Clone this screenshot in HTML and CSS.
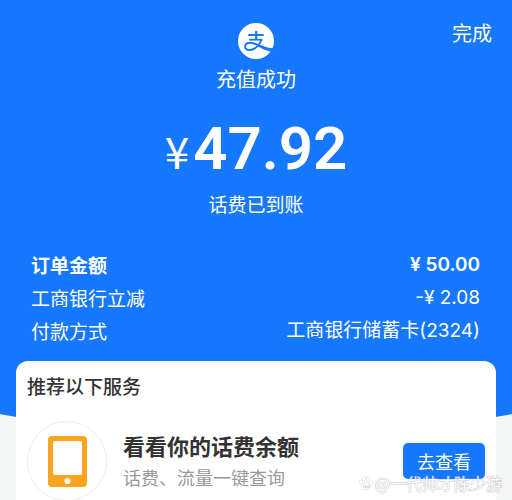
FILE: index.html
```html
<!DOCTYPE html>
<html lang="zh-CN">
<head>
<meta charset="utf-8">
<meta name="viewport" content="width=device-width, initial-scale=1">
<title>充值成功</title>
<link rel="stylesheet" href="styles.css">
</head>
<body>
<main class="page">
  <header class="hero">
    <button class="done" type="button">完成</button>
    <svg class="logo" viewBox="0 0 36 36" aria-hidden="true">
      <circle cx="18" cy="18" r="18" fill="#fff"/>
      <g fill="none" stroke="#1677ff">
        <path d="M10.300 12H25.700M18.200 8V17" stroke-width="2.200"/>
        <path d="M11.200 16.700H24.200" stroke-width="1.800"/>
        <path d="M23.600 16.500C21.800 21.500 17 27 12 27C8.800 27 7.200 25.500 7.200 23.400C7.200 21 9.300 19.700 12 19.700C17 19.700 22 24 35 27" stroke-width="2"/>
      </g>
      <path d="M20 22C25 24 29 25 35 25.500L33.500 29C28 27.500 23.500 25.500 19 23Z" fill="#1677ff"/>
    </svg>
    <h1 class="title">充值成功</h1>
    <p class="amount"><span class="currency">¥</span>47.92</p>
    <p class="status">话费已到账</p>
  </header>
  <dl class="details">
    <div class="row strong"><dt>订单金额</dt><dd>¥ 50.00</dd></div>
    <div class="row"><dt>工商银行立减</dt><dd>-¥ 2.08</dd></div>
    <div class="row"><dt>付款方式</dt><dd>工商银行储蓄卡(2324)</dd></div>
  </dl>
  <section class="card">
    <h2 class="card-title">推荐以下服务</h2>
    <div class="service">
      <span class="service-icon">
        <svg viewBox="0 0 39 51" aria-hidden="true">
          <rect width="39" height="51" rx="4" fill="#f9a51f"/>
          <rect x="5" y="5" width="29" height="34" rx="2" fill="#fff"/>
          <circle cx="19.500" cy="45" r="3" fill="#fff"/>
        </svg>
      </span>
      <div class="service-text">
        <h3>看看你的话费余额</h3>
        <p>话费、流量一键查询</p>
      </div>
      <button class="view" type="button">去查看</button>
    </div>
  </section>
  <div class="watermark">
    <svg viewBox="0 0 16 16" aria-hidden="true">
      <g fill="#fff" stroke="#bbb" stroke-width="1">
        <ellipse cx="2.500" cy="7" rx="1.800" ry="2.300"/>
        <ellipse cx="6" cy="3" rx="1.700" ry="2.300"/>
        <ellipse cx="10.500" cy="3" rx="1.700" ry="2.300"/>
        <ellipse cx="13.600" cy="7" rx="1.700" ry="2.300"/>
        <path d="M8 7C10 7 10.500 9 12.300 10.600C14 12.500 12.500 15.300 10.500 15C8.500 14.600 8 14.600 6 15C3.500 15.400 2 12.800 3.800 10.800C5.500 9.300 6 7 8 7Z"/>
        <path d="M5.500 11V13H7.500V10M9.300 10.500V13H11.500V10.500" fill="none"/>
      </g>
    </svg>
    <span>@一代帅才陈少游</span>
  </div>
</main>
</body>
</html>
```
FILE: styles.css
```css
* { box-sizing: border-box; }

html { background: #f4f5f5; }

body, h1, h2, h3, p, dl, dd { margin: 0; }

body {
  font-family: "Noto Sans CJK SC", sans-serif;
  color: #fff;
}

button {
  border: 0;
  padding: 0;
  font: inherit;
  color: inherit;
}

.page {
  position: relative;
  isolation: isolate;
  overflow: hidden;
  height: 100vh;
}

.page::before {
  content: "";
  position: absolute;
  z-index: -1;
  top: 0;
  left: -10%;
  right: -10%;
  height: 432px;
  background: #1677ff;
  border-radius: 0 0 50% 50% / 0 0 40px 40px;
}

.hero {
  display: flex;
  flex-direction: column;
  align-items: center;
  padding-top: 23px;
}

.done {
  position: absolute;
  top: 18px;
  right: 20px;
  background: none;
  font-size: 20px;
  line-height: 30px;
}

.logo { width: 36px; height: 36px; }

.title {
  margin-top: 5px;
  font-size: 20px;
  font-weight: 400;
  line-height: 30px;
}

.amount {
  display: flex;
  align-items: baseline;
  gap: 4px;
  height: 80px;
  margin-top: 15px;
  font-family: Roboto, sans-serif;
  font-size: 60px;
  font-weight: 600;
  line-height: 80px;
}

.currency {
  font-family: "Noto Sans CJK SC", sans-serif;
  font-size: 44px;
  font-weight: 400;
}

.status {
  font-size: 19px;
  font-weight: 400;
  line-height: 30px;
}

.details {
  padding: 29px 32px 14px 31px;
  font-size: 19px;
  line-height: 33px;
}

.row {
  display: flex;
  justify-content: space-between;
}

.row dd { font-family: Inter, "Noto Sans CJK SC", sans-serif; }

.strong { font-weight: 600; }

.card {
  margin: 0 16px;
  padding: 10px 11px 16px;
  border-radius: 12px;
  background: #fff;
  color: #333;
}

.card-title {
  font-size: 19px;
  font-weight: 500;
  line-height: 30px;
}

.service {
  display: flex;
  align-items: center;
  margin-top: 20px;
}

.service-icon {
  display: grid;
  place-items: center;
  width: 80px;
  height: 80px;
  border: 1px solid #eee;
  border-radius: 50%;
}

.service-icon svg { width: 39px; height: 51px; }

.service-text { flex: 1; margin-left: 16px; }

.service-text h3 {
  font-size: 22px;
  font-weight: 700;
  line-height: 32px;
}

.service-text p {
  color: #999;
  font-size: 18px;
  line-height: 32px;
}

.view {
  width: 82px;
  height: 36px;
  border-radius: 5px;
  background: #1677ff;
  color: #fff;
  font-size: 18px;
  line-height: 36px;
}

.watermark {
  position: absolute;
  right: 10px;
  bottom: 6px;
  display: flex;
  align-items: center;
  gap: 2px;
  color: #fff;
  font-size: 16px;
  line-height: 22px;
  -webkit-text-stroke: 1px #bbb;
  paint-order: stroke fill;
  opacity: 0.8;
}

.watermark svg { width: 14px; height: 14px; }
```
